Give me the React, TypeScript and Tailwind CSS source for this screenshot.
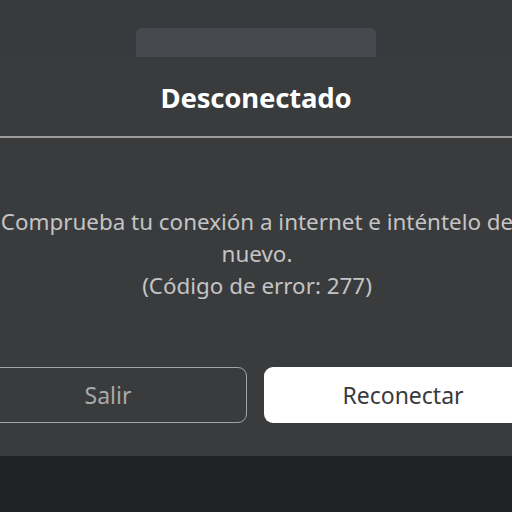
export default function App() {
  return (
    <div
      className="w-[512px] h-[512px] overflow-hidden bg-[#383a3e] flex flex-col"
      style={{ fontFamily: '"Noto Sans", "Open Sans", sans-serif' }}
    >
      {/* background card peeking out behind the dialog */}
      <div className="h-[57px] shrink-0 flex items-end">
        <div className="ml-[136px] w-[240px] h-[29px] rounded-t-md bg-[#46494d]" />
      </div>

      {/* dialog */}
      <div className="h-[399px] shrink-0 bg-[#3a3b3d] flex flex-col">
        <div className="h-[79px] flex items-center justify-center pt-[3px]">
          <h1 className="text-[27.5px] font-bold text-white tracking-[-0.2px]">Desconectado</h1>
        </div>
        <div className="h-[2px] bg-[#9c9c9c]" />

        <div className="w-[576px] ml-[-31px] pt-[68px] text-center text-[22.4px] leading-[32px] text-[#c4c4c4]">
          Comprueba tu conexión a internet e inténtelo de
          <br />
          nuevo.
          <br />
          (Código de error: 277)
        </div>

        <div className="ml-[-31px] mt-[65px] flex gap-[17px]">
          <button className="w-[278px] shrink-0 h-[56px] rounded-[9px] border-[1.5px] border-[#a4a4a4] text-[23px] text-[#a9a9a9]">
            Salir
          </button>
          <button className="w-[278px] shrink-0 h-[56px] rounded-[9px] bg-white text-[23px] text-[#393a3c]">
            Reconectar
          </button>
        </div>
      </div>

      <div className="flex-1 bg-[#202224]" />
    </div>
  );
}
